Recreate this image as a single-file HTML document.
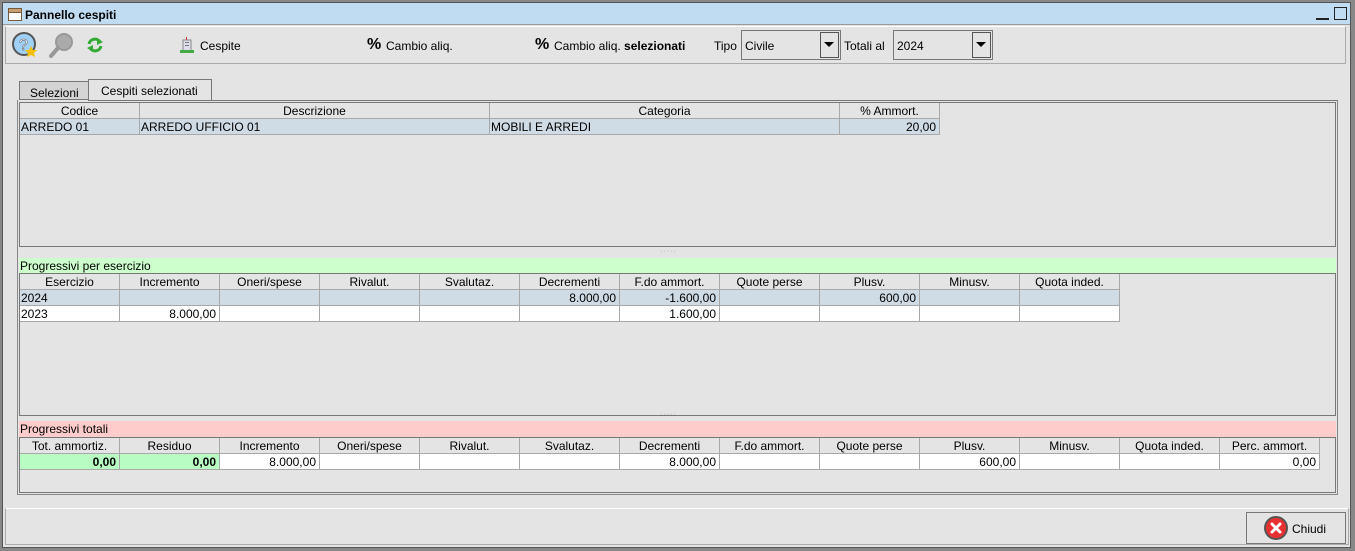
<!DOCTYPE html>
<html><head><meta charset="utf-8">
<style>
*{margin:0;padding:0;box-sizing:border-box}
body{width:1355px;height:551px;background:#e4e4e4;font-family:"Liberation Sans",sans-serif;font-size:12px;color:#000;position:relative;overflow:hidden}
.a{position:absolute}
.c{position:absolute;height:16px;line-height:16px;border-right:1px solid #a8a8a8;border-bottom:1px solid #a8a8a8;padding:0 3px;white-space:nowrap;overflow:hidden}
.h{text-align:center;background:#e4e4e4}
.r{text-align:right}
.s{background:#cfdbe5}
.w{background:#fff}
.g{background:#b8fcc4;font-weight:bold}
</style></head><body>
<div class="a" style="left:0;top:0;width:1355px;height:551px;background:#888"></div>
<div class="a" style="left:2px;top:2px;width:1349px;height:546px;background:#e4e4e4;border:1px solid #555"></div>
<div class="a" style="left:3px;top:3px;width:1347px;height:22px;background:#c0dcf2;border-bottom:1px solid #999"></div>
<svg class="a" style="left:8px;top:8px" width="14" height="13"><rect x="0.5" y="0.5" width="13" height="12" fill="#fff" stroke="#7a5a3a"/><rect x="1" y="1" width="12" height="3" fill="#c9a070"/><line x1="1" y1="4.5" x2="13" y2="4.5" stroke="#7a5a3a"/></svg>
<div class="a" style="left:25px;top:8px;font-weight:bold;font-size:12px">Pannello cespiti</div>
<div class="a" style="left:1316px;top:18px;width:13px;height:2px;background:#222"></div>
<div class="a" style="left:1334px;top:7px;width:13px;height:13px;border:1.5px solid #222"></div>
<div class="a" style="left:5px;top:26px;width:1341px;height:38px;border:1px solid #aaa;border-top:1px solid #fff"></div>
<svg class="a" style="left:12px;top:32px" width="26" height="26"><circle cx="12" cy="12" r="11" fill="#9fd0f5" stroke="#555" stroke-width="2"/><text x="7" y="18" font-size="16" font-family="Liberation Sans" fill="#fff" stroke="#555" stroke-width=".5">?</text><polygon points="19,14 21,18 25,18 22,21 23,25 19,23 15,25 16,21 13,18 17,18" fill="#f8c000"/></svg>
<svg class="a" style="left:49px;top:32px" width="26" height="26"><circle cx="15" cy="10" r="8" fill="#aaa" stroke="#999" stroke-width="2"/><line x1="9" y1="16" x2="2" y2="24" stroke="#999" stroke-width="4" stroke-linecap="round"/></svg>
<svg class="a" style="left:86px;top:36px" width="18" height="18"><path d="M3 8 A6 6 0 0 1 14 6" fill="none" stroke="#3a3" stroke-width="3"/><polygon points="11,2 17,6 11,9" fill="#3a3"/><path d="M15 10 A6 6 0 0 1 4 12" fill="none" stroke="#3a3" stroke-width="3"/><polygon points="7,16 1,12 7,9" fill="#3a3"/></svg>
<svg class="a" style="left:180px;top:37px" width="14" height="16"><rect x="3" y="3" width="8" height="11" fill="#dde" stroke="#888"/><rect x="5" y="5" width="4" height="1" fill="#777"/><rect x="5" y="8" width="4" height="1" fill="#777"/><rect x="0" y="13" width="14" height="3" fill="#4a4"/><rect x="6" y="0" width="1" height="3" fill="#c33"/></svg>
<div class="a" style="left:200px;top:39px;font-size:12px">Cespite</div>
<div class="a" style="left:367px;top:36px;font-size:16px;font-weight:bold">%</div>
<div class="a" style="left:386px;top:39px">Cambio aliq.</div>
<div class="a" style="left:535px;top:36px;font-size:16px;font-weight:bold">%</div>
<div class="a" style="left:554px;top:39px">Cambio aliq. <b>selezionati</b></div>
<div class="a" style="left:714px;top:39px">Tipo</div>
<div class="a" style="left:741px;top:30px;width:100px;height:30px;border:1px solid #777;background:#e4e4e4"></div>
<div class="a" style="left:745px;top:39px">Civile</div>
<div class="a" style="left:820px;top:32px;width:19px;height:26px;border:1px solid #555"></div>
<svg class="a" style="left:824px;top:42px" width="11" height="6"><polygon points="0,0 10,0 5,5" fill="#000"/></svg>
<div class="a" style="left:844px;top:39px">Totali al</div>
<div class="a" style="left:893px;top:30px;width:100px;height:30px;border:1px solid #777"></div>
<div class="a" style="left:897px;top:39px">2024</div>
<div class="a" style="left:972px;top:32px;width:19px;height:26px;border:1px solid #555"></div>
<svg class="a" style="left:976px;top:42px" width="11" height="6"><polygon points="0,0 10,0 5,5" fill="#000"/></svg>
<div class="a" style="left:19px;top:81px;width:70px;height:19px;border:1px solid #777;background:#d4d4d4"></div>
<div class="a" style="left:30px;top:86px">Selezioni</div>
<div class="a" style="left:88px;top:79px;width:124px;height:22px;border:1px solid #777;border-bottom:none;background:#e4e4e4"></div>
<div class="a" style="left:101px;top:84px">Cespiti selezionati</div>
<div class="a" style="left:17px;top:100px;width:1321px;height:395px;border:1px solid #888;border-top:none"></div>
<div class="a" style="left:88px;top:100px;width:1250px;height:1px;background:#777"></div>
<div class="a" style="left:19px;top:102px;width:1317px;height:145px;border:1px solid #777"></div>
<div class="a" style="left:20px;top:103px;width:920px;height:32px">
<div class="c h" style="left:0;top:0;width:120px">Codice</div><div class="c h" style="left:120px;top:0;width:350px">Descrizione</div><div class="c h" style="left:470px;top:0;width:350px">Categoria</div><div class="c h" style="left:820px;top:0;width:100px">% Ammort.</div>
<div class="c s" style="left:0;top:16px;width:120px;padding-left:1px">ARREDO 01</div><div class="c s" style="left:120px;top:16px;width:350px;padding-left:1px">ARREDO UFFICIO 01</div><div class="c s" style="left:470px;top:16px;width:350px;padding-left:1px">MOBILI E ARREDI</div><div class="c s r" style="left:820px;top:16px;width:100px">20,00</div>
</div>
<div class="a" style="left:660px;top:248px;font-size:7px;color:#999;letter-spacing:1px">·····</div>
<div class="a" style="left:19px;top:258px;width:1317px;height:15px;background:#ccffcc;padding-left:1px;line-height:16px">Progressivi per esercizio</div>
<div class="a" style="left:19px;top:273px;width:1317px;height:143px;border:1px solid #777"></div>
<div class="a" style="left:20px;top:274px;width:1100px;height:48px">
<div class="c h" style="left:0;top:0;width:100px">Esercizio</div><div class="c h" style="left:100px;top:0;width:100px">Incremento</div><div class="c h" style="left:200px;top:0;width:100px">Oneri/spese</div><div class="c h" style="left:300px;top:0;width:100px">Rivalut.</div><div class="c h" style="left:400px;top:0;width:100px">Svalutaz.</div><div class="c h" style="left:500px;top:0;width:100px">Decrementi</div><div class="c h" style="left:600px;top:0;width:100px">F.do ammort.</div><div class="c h" style="left:700px;top:0;width:100px">Quote perse</div><div class="c h" style="left:800px;top:0;width:100px">Plusv.</div><div class="c h" style="left:900px;top:0;width:100px">Minusv.</div><div class="c h" style="left:1000px;top:0;width:100px">Quota inded.</div>
<div class="c s" style="left:0;top:16px;width:100px;padding-left:1px">2024</div><div class="c s" style="left:100px;top:16px;width:100px"></div><div class="c s" style="left:200px;top:16px;width:100px"></div><div class="c s" style="left:300px;top:16px;width:100px"></div><div class="c s" style="left:400px;top:16px;width:100px"></div><div class="c s r" style="left:500px;top:16px;width:100px">8.000,00</div><div class="c s r" style="left:600px;top:16px;width:100px">-1.600,00</div><div class="c s" style="left:700px;top:16px;width:100px"></div><div class="c s r" style="left:800px;top:16px;width:100px">600,00</div><div class="c s" style="left:900px;top:16px;width:100px"></div><div class="c s" style="left:1000px;top:16px;width:100px"></div>
<div class="c w" style="left:0;top:32px;width:100px;padding-left:1px">2023</div><div class="c w r" style="left:100px;top:32px;width:100px">8.000,00</div><div class="c w" style="left:200px;top:32px;width:100px"></div><div class="c w" style="left:300px;top:32px;width:100px"></div><div class="c w" style="left:400px;top:32px;width:100px"></div><div class="c w" style="left:500px;top:32px;width:100px"></div><div class="c w r" style="left:600px;top:32px;width:100px">1.600,00</div><div class="c w" style="left:700px;top:32px;width:100px"></div><div class="c w" style="left:800px;top:32px;width:100px"></div><div class="c w" style="left:900px;top:32px;width:100px"></div><div class="c w" style="left:1000px;top:32px;width:100px"></div>
</div>
<div class="a" style="left:660px;top:411px;font-size:7px;color:#999;letter-spacing:1px">·····</div>
<div class="a" style="left:19px;top:421px;width:1317px;height:16px;background:#ffcccc;padding-left:1px;line-height:17px">Progressivi totali</div>
<div class="a" style="left:19px;top:437px;width:1317px;height:56px;border:1px solid #777"></div>
<div class="a" style="left:20px;top:438px;width:1300px;height:32px">
<div class="c h" style="left:0;top:0;width:100px">Tot. ammortiz.</div><div class="c h" style="left:100px;top:0;width:100px">Residuo</div><div class="c h" style="left:200px;top:0;width:100px">Incremento</div><div class="c h" style="left:300px;top:0;width:100px">Oneri/spese</div><div class="c h" style="left:400px;top:0;width:100px">Rivalut.</div><div class="c h" style="left:500px;top:0;width:100px">Svalutaz.</div><div class="c h" style="left:600px;top:0;width:100px">Decrementi</div><div class="c h" style="left:700px;top:0;width:100px">F.do ammort.</div><div class="c h" style="left:800px;top:0;width:100px">Quote perse</div><div class="c h" style="left:900px;top:0;width:100px">Plusv.</div><div class="c h" style="left:1000px;top:0;width:100px">Minusv.</div><div class="c h" style="left:1100px;top:0;width:100px">Quota inded.</div><div class="c h" style="left:1200px;top:0;width:100px">Perc. ammort.</div>
<div class="c g r" style="left:0;top:16px;width:100px">0,00</div><div class="c g r" style="left:100px;top:16px;width:100px">0,00</div><div class="c w r" style="left:200px;top:16px;width:100px">8.000,00</div><div class="c w" style="left:300px;top:16px;width:100px"></div><div class="c w" style="left:400px;top:16px;width:100px"></div><div class="c w" style="left:500px;top:16px;width:100px"></div><div class="c w r" style="left:600px;top:16px;width:100px">8.000,00</div><div class="c w" style="left:700px;top:16px;width:100px"></div><div class="c w" style="left:800px;top:16px;width:100px"></div><div class="c w r" style="left:900px;top:16px;width:100px">600,00</div><div class="c w" style="left:1000px;top:16px;width:100px"></div><div class="c w" style="left:1100px;top:16px;width:100px"></div><div class="c w r" style="left:1200px;top:16px;width:100px">0,00</div>
</div>
<div class="a" style="left:5px;top:508px;width:1344px;height:37px;border:1px solid #aaa;border-top:1px solid #fff"></div>
<div class="a" style="left:1246px;top:512px;width:100px;height:32px;border:1px solid #777"></div>
<svg class="a" style="left:1264px;top:516px" width="24" height="24"><circle cx="12" cy="12" r="11" fill="#e83030" stroke="#555" stroke-width="2"/><path d="M8 8 L16 16 M16 8 L8 16" stroke="#fff" stroke-width="3" stroke-linecap="round"/></svg>
<div class="a" style="left:1292px;top:522px">Chiudi</div>
</body></html>
